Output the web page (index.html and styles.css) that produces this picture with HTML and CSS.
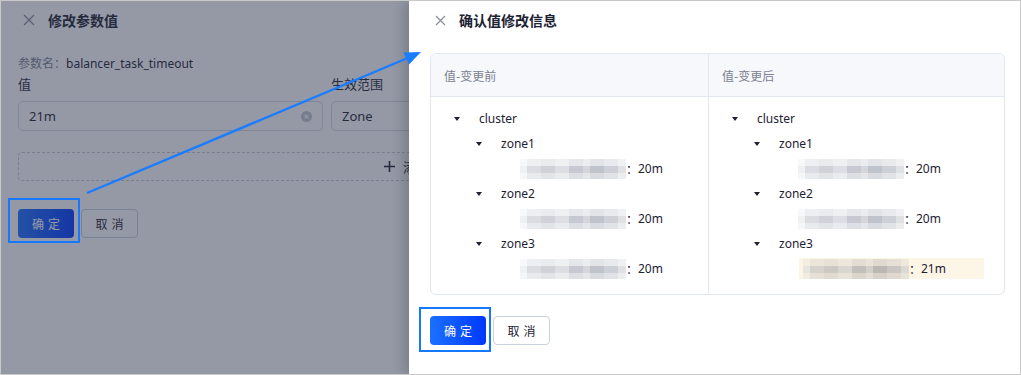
FILE: index.html
```html
<!DOCTYPE html>
<html lang="zh-CN">
<head>
<meta charset="UTF-8">
<meta name="viewport" content="width=device-width, initial-scale=1.0">
<title>确认值修改信息</title>
<link rel="stylesheet" href="styles.css">
</head>
<body>

<div class="frame">

    <!-- drawer underneath, covered by the mask -->
    <section class="form-drawer">
        <div class="form-sheet">
            <div class="drawer-head">
                <svg class="close-x" width="12" height="12" viewBox="0 0 12 12"><path d="M1 1L11 11M11 1L1 11"/></svg>
                <h3>修改参数值</h3>
            </div>
            <div class="param-name"><span class="muted">参数名：</span>balancer_task_timeout</div>
            <div class="field-row">
                <div class="field field-value">
                    <label>值</label>
                    <div class="input">21m
                        <svg class="clear-btn" width="11" height="11" viewBox="0 0 11 11"><circle cx="5.5" cy="5.5" r="5.5"/><path d="M3.6 3.6L7.4 7.4M7.4 3.6L3.6 7.4"/></svg>
                    </div>
                </div>
                <div class="field field-scope">
                    <label>生效范围</label>
                    <div class="input">Zone</div>
                </div>
            </div>
            <div class="add-box">
                <svg class="plus" width="11" height="11" viewBox="0 0 11 11"><path d="M5.5 0V11M0 5.5H11"/></svg>
                添加
            </div>
            <div class="actions">
                <button class="btn btn-primary">确定</button>
                <button class="btn">取消</button>
            </div>
        </div>
        <div class="mask"></div>
    </section>

    <!-- confirm drawer -->
    <section class="confirm-drawer">
        <div class="drawer-head">
            <svg class="close-x" width="11" height="11" viewBox="0 0 11 11"><path d="M1 1L10 10M10 1L1 10"/></svg>
            <h3>确认值修改信息</h3>
        </div>

        <div class="compare">
            <div class="compare-th">值-变更前</div>
            <div class="compare-th">值-变更后</div>

            <div class="tree">
                <div class="node lv0"><i class="caret"></i>cluster</div>
                <div class="node lv1"><i class="caret"></i>zone1</div>
                <div class="node lv2"><span class="leaf"><span class="blur"></span><span class="colon">：</span>20m</span></div>
                <div class="node lv1"><i class="caret"></i>zone2</div>
                <div class="node lv2"><span class="leaf"><span class="blur"></span><span class="colon">：</span>20m</span></div>
                <div class="node lv1"><i class="caret"></i>zone3</div>
                <div class="node lv2"><span class="leaf"><span class="blur"></span><span class="colon">：</span>20m</span></div>
            </div>

            <div class="tree">
                <div class="node lv0"><i class="caret"></i>cluster</div>
                <div class="node lv1"><i class="caret"></i>zone1</div>
                <div class="node lv2"><span class="leaf"><span class="blur"></span><span class="colon">：</span>20m</span></div>
                <div class="node lv1"><i class="caret"></i>zone2</div>
                <div class="node lv2"><span class="leaf"><span class="blur"></span><span class="colon">：</span>20m</span></div>
                <div class="node lv1"><i class="caret"></i>zone3</div>
                <div class="node lv2"><span class="leaf changed"><span class="blur blur-warm"></span><span class="colon">：</span>21m</span></div>
            </div>
        </div>

        <div class="actions">
            <button class="btn btn-primary">确定</button>
            <button class="btn">取消</button>
        </div>
    </section>

    <!-- annotation marks drawn over the screenshot -->
    <svg class="marks" width="1021" height="375" viewBox="0 0 1021 375">
        <rect x="9" y="199" width="70" height="43"/>
        <rect x="420" y="308" width="70" height="43"/>
        <line x1="87" y1="193" x2="410" y2="57"/>
        <polygon points="403.5,52.5 421,52 409,64.5"/>
    </svg>
</div>

</body>
</html>
```

FILE: styles.css
```css
* {
    box-sizing: border-box;
}
body {
    margin: 0;
    font-family: "Noto Sans", "Noto Sans CJK SC", sans-serif;
    font-size: 12px;
    color: #1d2233;
}

.frame {
    position: relative;
    display: flex;
    width: 1021px;
    height: 375px;
    border: 1px solid #c9c9c9;
    background: #fff;
    overflow: hidden;
}

/* shared drawer bits */
.drawer-head {
    display: flex;
    align-items: center;
    height: 38px;
    padding-left: 5px;
}
.drawer-head h3 {
    margin: 0;
    font-family: "Noto Sans CJK SC", sans-serif;
    font-size: 14px;
    font-weight: 700;
    color: #1d2233;
}
.close-x {
    margin-right: 13px;
}
.close-x path {
    stroke: #8a8f9b;
    stroke-width: 1.3;
    fill: none;
}

.actions {
    display: flex;
    gap: 7px;
}
.btn {
    width: 57px;
    height: 29px;
    padding: 0 0 0 4px;
    border: 1px solid #c9d0de;
    border-radius: 4px;
    background: #fff;
    font-family: "Noto Sans CJK SC", sans-serif;
    font-size: 12px;
    letter-spacing: 4px;
    color: #1d2233;
}
.btn-primary {
    width: 56px;
    border: none;
    background: linear-gradient(90deg, #1b70ff, #0038ff);
    color: #fff;
}

/* left drawer (masked) */
.form-drawer {
    position: relative;
    flex: none;
    width: 408px;
    overflow: hidden;
}
.form-sheet {
    width: 812px;
    padding: 0 18px 0 17px;
}
.param-name {
    margin-top: 15px;
    line-height: 18px;
}
.muted {
    font-family: "Noto Sans CJK SC", sans-serif;
    color: #7d8290;
}
.field-row {
    display: flex;
    gap: 8px;
    margin-top: 2px;
}
.field label {
    display: block;
    line-height: 18px;
    margin-bottom: 8px;
    font-family: "Noto Sans CJK SC", sans-serif;
    font-size: 13px;
}
.field-value {
    width: 305px;
}
.field-scope {
    flex: 1;
}
.input {
    display: flex;
    align-items: center;
    height: 30px;
    padding: 0 10px;
    border: 1px solid #d3d8e2;
    border-radius: 5px;
    font-size: 13px;
}
.clear-btn {
    margin-left: auto;
}
.clear-btn circle {
    fill: #c2c6cf;
}
.clear-btn path {
    stroke: #fff;
    stroke-width: 1.2;
}
.add-box {
    display: flex;
    align-items: center;
    justify-content: center;
    gap: 8px;
    height: 29px;
    margin-top: 21px;
    border: 1px dashed #c3c8d3;
    border-radius: 4px;
    font-family: "Noto Sans CJK SC", sans-serif;
    font-size: 13px;
}
.plus path {
    stroke: #1d2233;
    stroke-width: 1.6;
}
.form-sheet .actions {
    margin-top: 28px;
}
.mask {
    position: absolute;
    inset: 0;
    background: rgba(43, 51, 75, 0.5);
}

/* right drawer */
.confirm-drawer {
    position: relative;
    z-index: 1;
    flex: 1;
    padding: 0 15px 0 21px;
    background: #fff;
    box-shadow: -5px 0 12px rgba(20, 25, 40, 0.22);
}
.compare {
    display: grid;
    grid-template-columns: 278px 1fr;
    margin-top: 14px;
    border: 1px solid #e3e7f0;
    border-radius: 6px;
    overflow: hidden;
}
.compare-th {
    display: flex;
    align-items: center;
    height: 43px;
    padding-left: 13px;
    background: #f7f8fc;
    border-bottom: 1px solid #e3e7f0;
    font-family: "Noto Sans CJK SC", sans-serif;
    color: #7b8191;
}
.compare > :nth-child(odd) {
    border-right: 1px solid #e3e7f0;
}
.tree {
    padding: 9px 0 13px;
}
.node {
    display: flex;
    align-items: center;
    height: 25px;
    padding-left: 20px;
}
.node.lv1 {
    padding-left: 42px;
}
.node.lv2 {
    padding-left: 64px;
}
.caret {
    position: relative;
    width: 28px;
    height: 25px;
}
.caret::before {
    content: "";
    position: absolute;
    left: 3px;
    top: 11px;
    border-left: 3.5px solid transparent;
    border-right: 3.5px solid transparent;
    border-top: 4px solid #1d2233;
}
.leaf {
    display: flex;
    align-items: center;
    width: 185px;
    height: 21px;
    margin-left: 21px;
    padding: 0 4px;
}
.leaf.changed {
    margin-left: 26px;
    background: #fdf5e6;
}
.colon {
    font-family: "Noto Sans CJK SC", sans-serif;
    width: 12px;
}
.blur {
    width: 106px;
    height: 20px;
    background:
        linear-gradient(180deg, rgba(255,255,255,.55) 0 7px, rgba(255,255,255,0) 7px 14px, rgba(255,255,255,.4) 14px),
        linear-gradient(90deg, #eef0f3 0 7px, #dadce2 7px 21px, #cfd2d9 21px 35px, #dcdee3 35px 49px, #c6c9d2 49px 63px, #d4d6dc 63px 70px, #bfc3cc 70px 84px, #cdd0d7 84px 98px, #dfe1e5 98px);
}
.blur-warm {
    background:
        linear-gradient(180deg, rgba(253,245,230,.55) 0 7px, rgba(253,245,230,0) 7px 14px, rgba(253,245,230,.4) 14px),
        linear-gradient(90deg, #e8e4de 0 7px, #d6d1cb 7px 21px, #cdc8c2 21px 35px, #d9d5cf 35px 49px, #c4bfba 49px 63px, #d2cec8 63px 70px, #bdb8b4 70px 84px, #cbc6c1 84px 98px, #dcd8d2 98px);
}
.confirm-drawer .actions {
    margin-top: 21px;
}

/* annotation marks */
.marks {
    position: absolute;
    left: -1px;
    top: -1px;
    z-index: 2;
    pointer-events: none;
}
.marks rect {
    fill: none;
    stroke: #1677ff;
    stroke-width: 2;
}
.marks line {
    stroke: #1a7cff;
    stroke-width: 2.4;
}
.marks polygon {
    fill: #1a7cff;
}
```
